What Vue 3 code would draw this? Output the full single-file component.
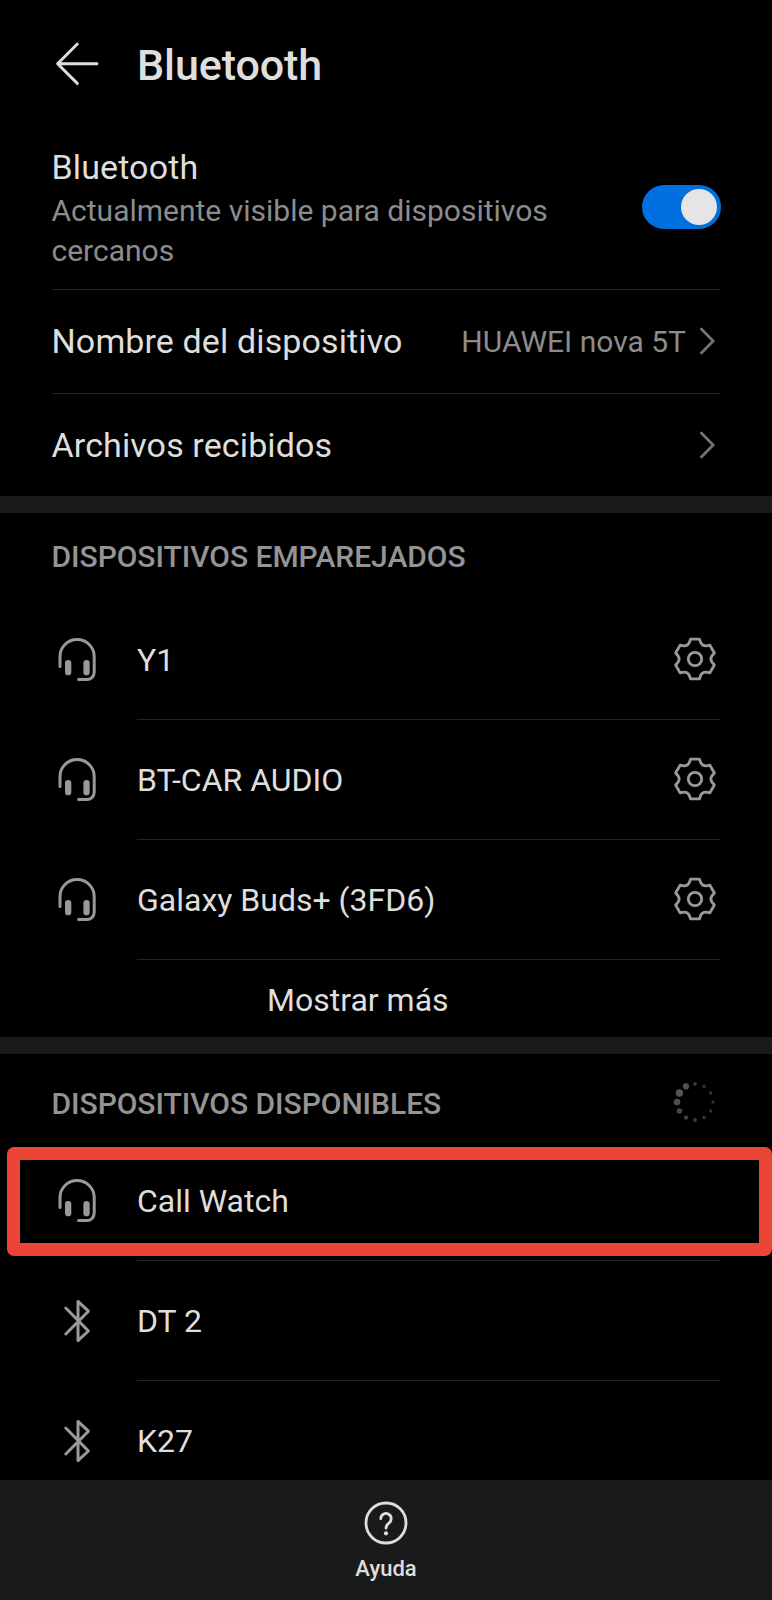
<!-- Bluetooth settings screen -->
<template>
  <div class="screen">
    <header class="header">
      <svg class="back" width="46" height="46" viewBox="0 0 46 46">
        <path d="M23.3 3 L3.6 22.7 L23.3 42.4 M3.6 22.7 H43" />
      </svg>
      <h1 class="title">Bluetooth</h1>
    </header>

    <section class="settings">
      <div class="row row-main">
        <div class="row-text">
          <div class="label">Bluetooth</div>
          <div class="hint">Actualmente visible para dispositivos cercanos</div>
        </div>
        <button class="switch" :class="{ on: enabled }" @click="enabled = !enabled">
          <span class="knob"></span>
        </button>
      </div>
      <div class="row row-link">
        <span class="label">Nombre del dispositivo</span>
        <span class="value">HUAWEI nova 5T</span>
        <svg class="chevron" width="18" height="30" viewBox="0 0 18 30">
          <path d="M3.3 3 L15.2 15 L3.3 27" />
        </svg>
      </div>
      <div class="row row-link">
        <span class="label">Archivos recibidos</span>
        <svg class="chevron" width="18" height="30" viewBox="0 0 18 30">
          <path d="M3.3 3 L15.2 15 L3.3 27" />
        </svg>
      </div>
    </section>

    <section class="group paired">
      <h2 class="group-title">DISPOSITIVOS EMPAREJADOS</h2>
      <div v-for="device in paired" :key="device" class="device">
        <svg class="headset" width="42" height="46" viewBox="0 0 42 46">
          <path d="M4 29.6 V19.6 A17.1 17.1 0 0 1 38.2 19.6 V35.3 A7.3 7.3 0 0 1 30.9 42.6 H22.6" />
          <rect x="9" y="23" width="6.3" height="15.3" rx="3.1" />
          <rect x="27.4" y="23" width="6.3" height="15.3" rx="3.1" />
        </svg>
        <div class="device-body">
          <span class="name">{{ device }}</span>
          <svg class="gear" width="46" height="46" viewBox="-23 -23 46 46">
            <path :d="gearPath" />
            <circle r="6.7" />
          </svg>
        </div>
      </div>
      <div class="more">Mostrar más</div>
    </section>

    <section class="group available">
      <div class="group-head">
        <h2 class="group-title">DISPOSITIVOS DISPONIBLES</h2>
        <svg class="spinner" width="46" height="46" viewBox="-23 -23 46 46">
          <circle
            v-for="(dot, i) in dots"
            :key="i"
            :cx="dot.x"
            :cy="dot.y"
            :r="dot.r"
            :fill="dot.fill"
          />
        </svg>
      </div>
      <div v-for="device in available" :key="device.name" class="device">
        <svg v-if="device.audio" class="headset" width="42" height="46" viewBox="0 0 42 46">
          <path d="M4 29.6 V19.6 A17.1 17.1 0 0 1 38.2 19.6 V35.3 A7.3 7.3 0 0 1 30.9 42.6 H22.6" />
          <rect x="9" y="23" width="6.3" height="15.3" rx="3.1" />
          <rect x="27.4" y="23" width="6.3" height="15.3" rx="3.1" />
        </svg>
        <svg v-else class="bt" width="42" height="46" viewBox="0 0 42 46">
          <path d="M9.8 10 L32.4 33 L22 42.6 V3.4 L32.4 13.2 L9.8 36" />
        </svg>
        <div class="device-body">
          <span class="name">{{ device.name }}</span>
        </div>
        <div v-if="device.marked" class="marker"></div>
      </div>
    </section>

    <footer class="footer">
      <svg class="help" width="46" height="46" viewBox="0 0 46 46">
        <circle cx="23" cy="23" r="20" />
        <path d="M17.8 18.6 A5.2 5.2 0 1 1 26.2 22.8 C24.2 24.3 23 25.3 23 28.2" />
        <circle class="dot" cx="23" cy="33.3" r="2.1" />
      </svg>
      <span class="help-text">Ayuda</span>
    </footer>
  </div>
</template>

<script setup>
import { ref } from 'vue'

const enabled = ref(true)

const paired = ['Y1', 'BT-CAR AUDIO', 'Galaxy Buds+ (3FD6)']

const available = [
  { name: 'Call Watch', audio: true, marked: true },
  { name: 'DT 2', audio: false },
  { name: 'K27', audio: false }
]

// one tooth plus the valley after it, repeated six times
const rotate = ([x, y], deg) => {
  const a = (deg * Math.PI) / 180
  const rx = x * Math.cos(a) - y * Math.sin(a)
  const ry = x * Math.sin(a) + y * Math.cos(a)
  return `${rx.toFixed(2)} ${ry.toFixed(2)}`
}

const gearPath =
  [0, 60, 120, 180, 240, 300]
    .map((deg, i) => {
      const p = (x, y) => rotate([x, y], deg)
      return `${i ? 'L' : 'M'}${p(-4.5, -19.8)} L${p(4.5, -19.8)} L${p(5.7, -16.3)} Q${p(7.4, -12.8)} ${p(11.27, -13.09)}`
    })
    .join(' ') + ' Z'

// spinner dots, clockwise from the top
const sizes = [1.9, 1.8, 1.8, 1.7, 1.8, 1.8, 1.9, 2.2, 2.7, 3.3, 3.7, 3.1]
const fills = ['#3a3a3a', '#333', '#333', '#333', '#333', '#363636', '#3a3a3a', '#424242', '#484848', '#505050', '#555', '#505050']
const dots = sizes.map((r, i) => {
  const a = (i * Math.PI) / 6
  return { x: 18 * Math.sin(a), y: -18 * Math.cos(a), r, fill: fills[i] }
})
</script>

<style>
body {
  margin: 0;
  background: #000;
}
</style>

<style scoped>
.screen {
  display: flex;
  flex-direction: column;
  width: 772px;
  height: 1600px;
  overflow: hidden;
  background: #000;
  color: #dedede;
  font-family: Roboto, "Liberation Sans", sans-serif;
}

h1,
h2 {
  margin: 0;
  font-weight: 500;
}

svg {
  display: block;
  flex: none;
  fill: none;
}

.header {
  display: flex;
  align-items: center;
  height: 128px;
  box-sizing: border-box;
  padding-left: 54px;
}

.back {
  stroke: #dedede;
  stroke-width: 2.9;
  stroke-linecap: round;
  stroke-linejoin: round;
}

.title {
  margin-left: 37px;
  padding-top: 1px;
  font-size: 43px;
  line-height: 50px;
  letter-spacing: -0.1px;
}

.settings {
  padding: 0 52px;
  height: 368px;
  border-bottom: 17px solid #1a1a1a;
}

.row {
  display: flex;
  align-items: center;
  box-sizing: border-box;
}

.row + .row {
  border-top: 1px solid #232323;
}

.row-main {
  height: 161px;
}

.row-text {
  flex: 1;
  padding-bottom: 2px;
}

.label {
  margin-left: -0.5px;
  font-size: 34px;
  line-height: 44px;
  letter-spacing: 0.12px;
}

.hint {
  width: 520px;
  margin: 2px 0 0 -0.5px;
  font-size: 30px;
  line-height: 39.5px;
  color: #8c8c8c;
}

.switch {
  width: 79px;
  height: 44px;
  margin: 0 -1px 4px 0;
  padding: 4px;
  border: 0;
  border-radius: 22px;
  background: #444;
  display: flex;
}

.switch.on {
  background: #006fe0;
  justify-content: flex-end;
}

.knob {
  width: 36px;
  height: 36px;
  border-radius: 50%;
  background: #e5e5e5;
}

.row-link {
  height: 103.5px;
}

.row-link .label {
  flex: 1;
}

.value {
  margin-right: 12px;
  font-size: 30px;
  color: #8c8c8c;
}

.chevron {
  margin-right: 4px;
  stroke: #747474;
  stroke-width: 2.7;
  stroke-linecap: round;
}

.group-title {
  margin-left: -0.5px;
  font-size: 30px;
  line-height: 40px;
  letter-spacing: -0.04px;
  color: #949494;
}

.paired {
  height: 524px;
  padding: 0 52px;
  border-bottom: 17px solid #1a1a1a;
}

.paired .group-title {
  padding: 24px 0 23px;
}

.device {
  position: relative;
  display: flex;
  align-items: center;
  height: 120px;
}

.headset,
.bt {
  margin-left: 4px;
  stroke: #999;
  stroke-width: 3;
  stroke-linecap: round;
  stroke-linejoin: round;
}

.headset rect {
  fill: #999;
  stroke: none;
}

.device-body {
  flex: 1;
  display: flex;
  align-items: center;
  justify-content: space-between;
  height: 120px;
  box-sizing: border-box;
  margin-left: 39px;
  border-bottom: 1px solid #232323;
}

.name,
.more {
  font-size: 32px;
  line-height: 40px;
}

.gear {
  margin: -1px 2px 0 0;
  stroke: #999;
  stroke-width: 2.8;
  stroke-linejoin: round;
}

.more {
  padding: 20px 0 0 215px;
}

.available {
  flex: 1;
  min-height: 0;
  padding: 0 52px;
  overflow: hidden;
}

.group-head {
  display: flex;
  justify-content: space-between;
  align-items: center;
  height: 87px;
}

.spinner {
  margin: 8px 2.5px 0 0;
}

.group-head .group-title {
  padding-top: 12px;
}

.marker {
  position: absolute;
  left: -45px;
  right: -52px;
  top: 5.5px;
  height: 83px;
  border: 13px solid #ea4536;
  border-radius: 7px;
}

.footer {
  display: flex;
  flex-direction: column;
  align-items: center;
  height: 120px;
  background: #1a1a1a;
}

.help {
  margin-top: 20px;
  stroke: #dedede;
  stroke-width: 2.8;
  stroke-linecap: round;
}

.help .dot {
  fill: #dedede;
  stroke: none;
}

.help-text {
  margin-top: 9px;
  font-size: 22px;
  line-height: 28px;
  font-weight: 500;
}
</style>
